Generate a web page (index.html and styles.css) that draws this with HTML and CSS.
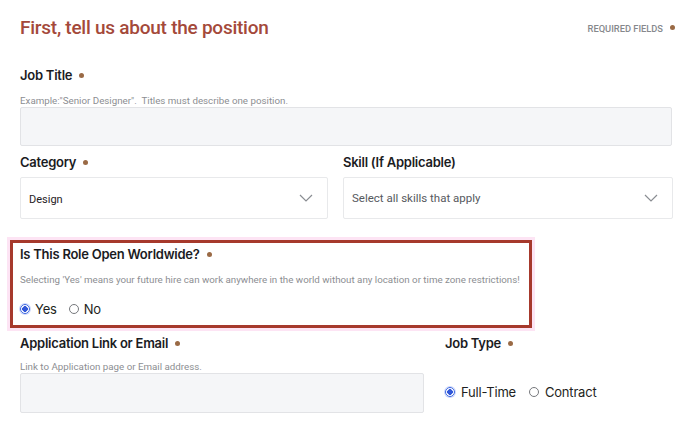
FILE: index.html
```html
<!DOCTYPE html>
<html>
<head>
<meta charset="utf-8">
<link rel="stylesheet" href="styles.css">
</head>
<body>
<div class="page">
  <div class="head">
    <h1 class="title">First, tell us about the position</h1>
    <div class="req">REQUIRED FIELDS <span class="dot"></span></div>
  </div>

  <div class="field f-job">
    <div class="label">Job Title <span class="dot"></span></div>
    <div class="help">Example:"Senior Designer".&nbsp; Titles must describe one position.</div>
    <div class="input input-full"></div>
  </div>

  <div class="row2">
    <div class="field">
      <div class="label">Category <span class="dot"></span></div>
      <div class="select">
        <span class="sel-text">Design</span>
        <svg class="chev" width="14" height="8" viewBox="0 0 14 8"><path d="M1 1l6 6 6-6" fill="none" stroke="#8a8d92" stroke-width="1.2"/></svg>
      </div>
    </div>
    <div class="field">
      <div class="label">Skill (If Applicable)</div>
      <div class="select">
        <span class="sel-text sel-ph">Select all skills that apply</span>
        <svg class="chev" width="14" height="8" viewBox="0 0 14 8"><path d="M1 1l6 6 6-6" fill="none" stroke="#8a8d92" stroke-width="1.2"/></svg>
      </div>
    </div>
  </div>

  <div class="world">
    <div class="label">Is This Role Open Worldwide? <span class="dot"></span></div>
    <div class="help">Selecting 'Yes' means your future hire can work anywhere in the world without any location or time zone restrictions!</div>
    <div class="radios">
      <label class="radio"><span class="rb on"></span>Yes</label>
      <label class="radio"><span class="rb"></span>No</label>
    </div>
  </div>

  <div class="row3">
    <div class="field app">
      <div class="label">Application Link or Email <span class="dot"></span></div>
      <div class="help">Link to Application page or Email address.</div>
      <div class="input input-app"></div>
    </div>
    <div class="field jobtype">
      <div class="label">Job Type <span class="dot"></span></div>
      <div class="radios radios-jt">
        <label class="radio"><span class="rb on"></span>Full-Time</label>
        <label class="radio"><span class="rb"></span>Contract</label>
      </div>
    </div>
  </div>
</div>
</body>
</html>
```

FILE: styles.css
```css
* { box-sizing: border-box; }
html, body { margin: 0; padding: 0; background: #fff; }
body {
  font-family: Inter, "Noto Sans", Arial, sans-serif;
  color: #1f2124;
  width: 688px;
  height: 429px;
  overflow: hidden;
}
.page { padding: 16px 16px 0 20px; }

.head {
  display: flex;
  justify-content: space-between;
  align-items: center;
}
.title {
  margin: 0;
  font-family: Roboto, Arial, sans-serif;
  font-weight: 500;
  font-size: 19px;
  line-height: 24px;
  color: #a4493a;
  letter-spacing: -0.25px;
}
.req {
  font-family: Roboto, Arial, sans-serif;
  font-size: 9.3px;
  color: #86888c;
  font-weight: 500;
  display: flex;
  align-items: center;
  gap: 4px;
  margin-right: -3px;
}
.dot {
  display: inline-block;
  width: 5px;
  height: 5px;
  border-radius: 50%;
  background: #9a6a45;
  vertical-align: middle;
  margin-left: 4px;
  position: relative;
  top: -1px;
}
.req .dot { margin-left: 3px; }

.label {
  font-size: 13px;
  font-weight: 600;
  line-height: 18px;
  color: #1b1c1f;
  letter-spacing: -0.25px;
}
.help {
  font-family: Roboto, Arial, sans-serif;
  font-size: 9.75px;
  line-height: 12px;
  color: #8c8e92;
}

.f-job { margin-top: 26px; }
.f-job .help { margin-top: 11px; }
.input {
  background: #f5f6f8;
  border: 1px solid #e2e3e6;
  border-radius: 2px;
}
.input-full { height: 39px; width: 652px; }

.row2 {
  display: grid;
  grid-template-columns: 308px 330px;
  column-gap: 15px;
  margin-top: 7px;
}
.select {
  margin-top: 6px;
  height: 42px;
  border: 1px solid #e8e9eb;
  border-radius: 2px;
  display: flex;
  align-items: center;
  justify-content: space-between;
  padding: 0 14px 0 8px;
  background: #fff;
}
.sel-text {
  font-family: Roboto, Arial, sans-serif;
  font-size: 11px;
  color: #1f2124;
  position: relative;
  top: 1px;
}
.sel-ph { font-size: 11.5px; color: #56595e; top: 0; }
.chev { display: block; }

.world {
  margin: 21px 0 0 -10px;
  width: 522px;
  height: 88px;
  border: 3px solid #a6392c;
  box-shadow: 0 0 0 3px #fde4f4;
  padding: 2px 0 0 7px;
}
.world .help { margin-top: 11px; }
.radios {
  display: flex;
  gap: 12px;
  margin-top: 16px;
}
.radio {
  display: flex;
  align-items: center;
  font-size: 13px;
  color: #1e1f22;
  line-height: 14px;
  letter-spacing: -0.2px;
}
.rb {
  width: 10px;
  height: 10px;
  border-radius: 50%;
  border: 1px solid #76787c;
  margin-right: 5px;
  background: #fff;
}
.rb.on {
  border-color: #3b66e0;
  background: radial-gradient(circle, #3157d8 0 2.6px, #fff 3px);
  box-shadow: 0 0 0 1px #cfd9fb;
}

.row3 {
  display: grid;
  grid-template-columns: 404px 1fr;
  column-gap: 21px;
  margin-top: 6px;
}
.app .help { margin-top: 9px; }
.input-app { height: 40px; margin-top: 0; }
.radios-jt { margin-top: 33px; gap: 13px; }
.radios-jt .rb { margin-right: 6px; }
```
